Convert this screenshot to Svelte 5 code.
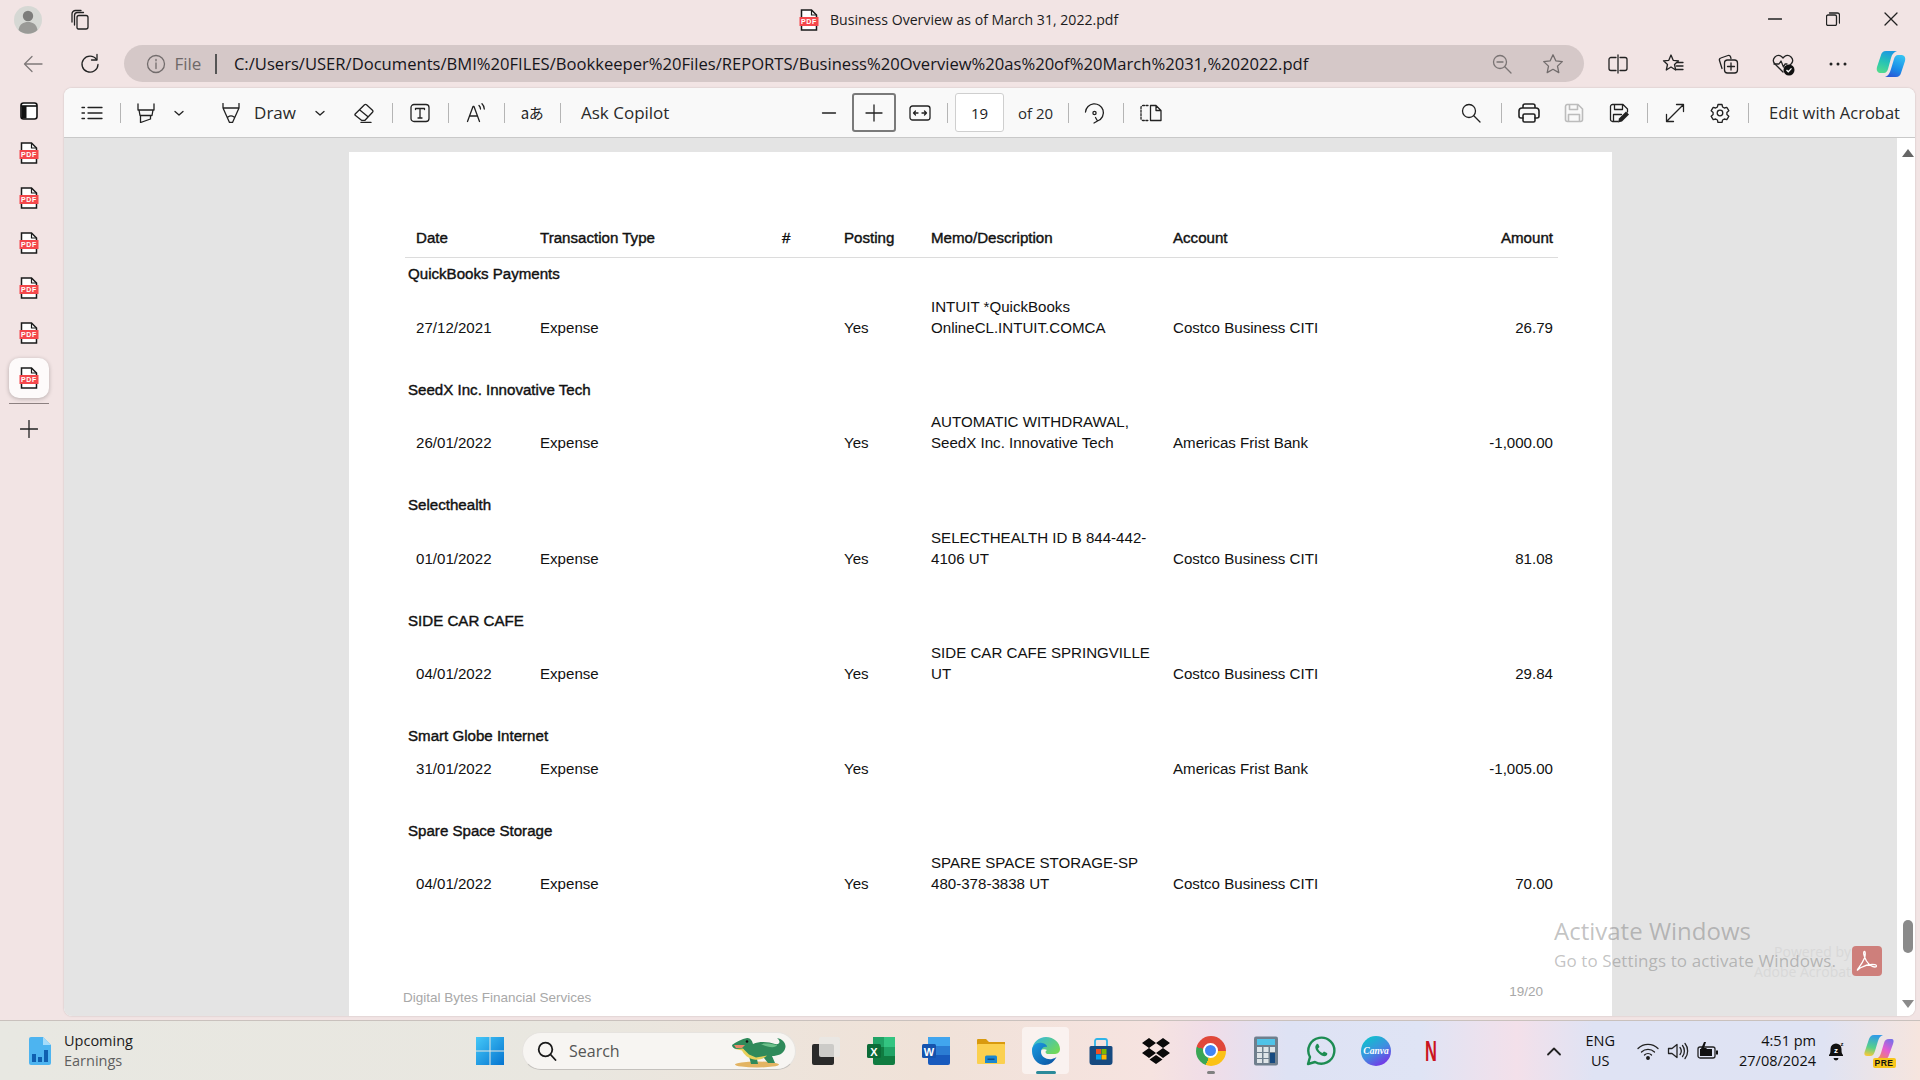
<script>
  // Ledger rows shown on the PDF page
  const groups = [
    { name: 'QuickBooks Payments', date: '27/12/2021', memo: ['INTUIT *QuickBooks', 'OnlineCL.INTUIT.COMCA'], account: 'Costco Business CITI', amount: '26.79' },
    { name: 'SeedX Inc. Innovative Tech', date: '26/01/2022', memo: ['AUTOMATIC WITHDRAWAL,', 'SeedX Inc. Innovative Tech'], account: 'Americas Frist Bank', amount: '-1,000.00' },
    { name: 'Selecthealth', date: '01/01/2022', memo: ['SELECTHEALTH ID B 844-442-', '4106 UT'], account: 'Costco Business CITI', amount: '81.08' },
    { name: 'SIDE CAR CAFE', date: '04/01/2022', memo: ['SIDE CAR CAFE SPRINGVILLE', 'UT'], account: 'Costco Business CITI', amount: '29.84' },
    { name: 'Smart Globe Internet', date: '31/01/2022', memo: [], account: 'Americas Frist Bank', amount: '-1,005.00' },
    { name: 'Spare Space Storage', date: '04/01/2022', memo: ['SPARE SPACE STORAGE-SP', '480-378-3838 UT'], account: 'Costco Business CITI', amount: '70.00' }
  ];

  const url = 'C:/Users/USER/Documents/BMI%20FILES/Bookkeeper%20Files/REPORTS/Business%20Overview%20as%20of%20March%2031,%202022.pdf';
  const sideTabs = [false, false, false, false, false, true];
</script>

{#snippet pdfIcon()}
  <svg class="pdf" viewBox="0 0 20 22" width="20" height="22">
    <path d="M2.500 1h10l5 5v15h-15z" fill="#fff" stroke="#1a1a1a" stroke-width="1.500" />
    <path d="M12.500 1v5h5" fill="none" stroke="#1a1a1a" stroke-width="1.200" />
    <rect x="0.500" y="8" width="19" height="9" fill="#f4474b" />
    <text x="10" y="15.200" text-anchor="middle" class="pdf-label">PDF</text>
  </svg>
{/snippet}

{#snippet chevron()}
  <svg class="ic" viewBox="0 0 12 12" width="12" height="12"><path d="M2 4.500 6 8l4-3.500" /></svg>
{/snippet}

<div class="screen">
  <header class="titlebar">
    <div class="title-left">
      <svg viewBox="0 0 28 28" width="28" height="28">
        <circle cx="14" cy="14" r="14" fill="#d6d8d4" />
        <circle cx="14" cy="10" r="5.200" fill="#7d7d7b" />
        <path d="M4.500 24c1-6 5-8 9.500-8s8.500 2 9.500 8a14 14 0 0 1-19 0z" fill="#9a9a97" />
      </svg>
      <svg class="ic tabs-icon" viewBox="0 0 22 22" width="22" height="22">
        <path d="M9 20h8a2 2 0 0 0 2-2V8.500a2 2 0 0 0-2-2H10a2 2 0 0 0-2 2V19z" />
        <path d="M5.500 16V6.500a3 3 0 0 1 3-3h6" />
        <path d="M3 13V5a3.500 3.500 0 0 1 3.500-3.500H12" />
      </svg>
    </div>
    <div class="title-center">
      {@render pdfIcon()}
      <span>Business Overview as of March 31, 2022.pdf</span>
    </div>
    <div class="window-controls">
      <svg class="ic" viewBox="0 0 14 14" width="14" height="14"><path d="M0.500 7h13" /></svg>
      <svg class="ic" viewBox="0 0 14 14" width="14" height="14"><rect x="0.500" y="3" width="10" height="10.500" rx="1.500" /><path d="M3.500 1h8a2 2 0 0 1 2 2v8" /></svg>
      <svg class="ic" viewBox="0 0 14 14" width="14" height="14"><path d="M1 1l12 12M13 1 1 13" /></svg>
    </div>
  </header>

  <nav class="addressrow">
    <button class="nav-btn back" aria-label="Back">
      <svg class="ic" viewBox="0 0 22 22" width="22" height="22"><path d="M20 11H2.500M10 3.500 2.500 11l7.500 7.500" /></svg>
    </button>
    <button class="nav-btn refresh" aria-label="Refresh">
      <svg class="ic" viewBox="0 0 22 22" width="22" height="22"><path d="M17.500 6.500A8 8 0 1 0 19 11.500" /><path d="M18 1.500v5.500h-5.500" /></svg>
    </button>
    <div class="addressbar">
      <svg class="ic info" viewBox="0 0 20 20" width="20" height="20"><circle cx="10" cy="10" r="8.500" /><path d="M10 9v5.500M10 5.500v1.300" /></svg>
      <span class="file">File</span>
      <span class="bar"></span>
      <span class="url">{url}</span>
      <svg class="ic addr-zoom" viewBox="0 0 20 20" width="20" height="20"><circle cx="8" cy="8" r="6.500" /><path d="M12.800 12.800 19 19M5 8h6" /></svg>
      <svg class="ic addr-star" viewBox="0 0 22 22" width="22" height="22"><path d="m11 1.800 2.800 6 6.500.8-4.800 4.500 1.300 6.500-5.800-3.300-5.800 3.300 1.300-6.500L1.700 8.600l6.500-.8z" /></svg>
    </div>
    <div class="browser-tools">
      <svg class="ic" viewBox="0 0 20 20" width="20" height="20"><path d="M10 1v18M8 3.500H3a2 2 0 0 0-2 2v9a2 2 0 0 0 2 2h5M12 3.500h5a2 2 0 0 1 2 2v9a2 2 0 0 1-2 2h-5" /></svg>
      <svg class="ic" viewBox="0 0 22 22" width="22" height="22"><path d="m9 2 2.200 5.300 5.300.5-4 3.700 1.200 5.500L9 14l-4.700 3 1.200-5.500-4-3.700 5.300-.5zM15 9.500h6M14.500 13h6.500M13.500 16.500H21" /></svg>
      <svg class="ic" viewBox="0 0 22 22" width="22" height="22"><path d="M5 15.500 2.500 7.500a2 2 0 0 1 1.300-2.500L11 2.500a2 2 0 0 1 2.500 1.300l.5 1.700" /><rect x="7.500" y="7" width="13" height="13" rx="3" /><path d="M14 10v7M10.500 13.500h7" /></svg>
      <svg viewBox="0 0 24 24" width="24" height="24">
        <path class="stroke-only" d="M12 20 3.500 11.500a5 5 0 0 1 7-7L12 6l1.500-1.500a5 5 0 0 1 7 7L19 13" />
        <path class="stroke-only" d="M3 12h5l2-3 2.500 6 1.500-3h2" />
        <circle cx="18" cy="18" r="5.500" fill="#111" />
        <path d="m15.500 18 1.800 1.800 3.200-3.400" fill="none" stroke="#fff" stroke-width="1.300" />
      </svg>
      <svg viewBox="0 0 18 4" width="18" height="4"><circle cx="2" cy="2" r="1.500" fill="#222" /><circle cx="9" cy="2" r="1.500" fill="#222" /><circle cx="16" cy="2" r="1.500" fill="#222" /></svg>
      <svg class="copilot" viewBox="0 0 32 28" width="32" height="28">
        <defs>
          <linearGradient id="cpA" x1="0.500" y1="0" x2="0.200" y2="1"><stop offset="0" stop-color="#1c9ae0" /><stop offset="0.500" stop-color="#27c4b4" /><stop offset="1" stop-color="#55dc8c" /></linearGradient>
          <linearGradient id="cpB" x1="0.700" y1="0" x2="0.300" y2="1"><stop offset="0" stop-color="#35c1f1" /><stop offset="0.600" stop-color="#1b8ce8" /><stop offset="1" stop-color="#2b58d6" /></linearGradient>
        </defs>
        <path d="M11 1C8 1 6.500 3 6 5L2 17c-1 4 1 6 4 6h3c2 0 3.500-2 4-4l3-11c1-4 3-6 6-7z" fill="url(#cpA)" />
        <path d="M21 27c3 0 4.500-2 5-4l4-12c1-4-1-6-4-6h-3c-2 0-3.500 2-4 4l-3 10c-1 4-3 7-6 8z" fill="url(#cpB)" />
      </svg>
    </div>
  </nav>

  <div class="workspace">
    <aside class="sidebar">
      <svg class="panel-icon" viewBox="0 0 18 18" width="18" height="18">
        <rect x="1" y="1" width="16" height="16" rx="2.500" fill="#fff" stroke="#111" stroke-width="1.600" />
        <path d="M1 4h16" stroke="#111" stroke-width="1.600" />
        <rect x="1.500" y="4" width="5" height="12.500" fill="#111" />
      </svg>
      {#each sideTabs as active}
        <div class="side-tab" class:active>
          {@render pdfIcon()}
        </div>
      {/each}
      <div class="side-line"></div>
      <svg class="ic side-plus" viewBox="0 0 18 18" width="18" height="18"><path d="M9 0.500v17M0.500 9h17" /></svg>
    </aside>

    <main class="panel">
      <div class="toolbar">
        <button class="tb" aria-label="Contents">
          <svg class="ic" viewBox="0 0 22 16" width="22" height="16"><path d="M7 2.500h14M7 8h14M7 13.500h14M1 2.500h2.500M1 8h2.500M1 13.500h2.500" /></svg>
        </button>
        <span class="sep"></span>
        <button class="tb high" aria-label="Highlight">
          <svg class="ic" viewBox="0 0 20 20" width="20" height="20"><path d="M2 1v6h16V1M3 7l1 5.500h12l1-5.500M4.500 12.500V19.500l10-3.500v-3.500" /></svg>
        </button>
        <button class="tb-chev high-chev" aria-label="Highlight options">{@render chevron()}</button>
        <button class="tb pen" aria-label="Draw pen">
          <svg class="ic" viewBox="0 0 20 20" width="20" height="20"><path d="M2 .5v4.500l6.500 14.500h3L18 5V.5M2 5h16M7 14c2-1.500 4-1.500 6 0" /></svg>
        </button>
        <span class="tb-text draw">Draw</span>
        <button class="tb-chev draw-chev" aria-label="Draw options">{@render chevron()}</button>
        <button class="tb eraser" aria-label="Erase">
          <svg class="ic" viewBox="0 0 20 20" width="20" height="20"><path d="M1.200 11 10.500 1.800a1.500 1.500 0 0 1 2 0l6 5.500a1.500 1.500 0 0 1 0 2l-7.500 8H7.500l-6.300-5a1 1 0 0 1 0-1.300zM5.500 6.800l8.500 7M7 19.500h10" /></svg>
        </button>
        <span class="sep"></span>
        <button class="tb" aria-label="Add text">
          <svg class="ic" viewBox="0 0 20 20" width="20" height="20"><rect x="1" y="1.500" width="18" height="17" rx="3" /><path d="M5.500 6.500v-1h9v1M10 5.500v9.500M8 15h4" /></svg>
        </button>
        <span class="sep"></span>
        <button class="tb" aria-label="Read aloud">
          <svg class="ic" viewBox="0 0 20 20" width="20" height="20"><path d="M1.500 18.500 7 3.500h1l5.500 15M4 13h7M13 2.500c1 1 1.500 2.300 1.500 3.500M16 .8c1.500 1.500 2.300 3.300 2.300 5.200" /></svg>
        </button>
        <span class="sep"></span>
        <button class="tb translate">aあ</button>
        <span class="sep"></span>
        <span class="tb-text ask">Ask Copilot</span>

        <button class="tb zoom-out" aria-label="Zoom out">
          <svg class="ic" viewBox="0 0 16 16" width="16" height="16"><path d="M1.500 8h13" /></svg>
        </button>
        <button class="zoom-in" aria-label="Zoom in">
          <svg class="ic" viewBox="0 0 18 18" width="18" height="18"><path d="M9 1v16M1 9h16" /></svg>
        </button>
        <button class="tb fit" aria-label="Fit to width">
          <svg class="ic" viewBox="0 0 22 18" width="22" height="18"><rect x="1" y="2" width="20" height="14" rx="2.500" /><path d="M4.500 9h4.500M13 9h4.500M6.500 7 4.500 9l2 2M15.500 7l2 2-2 2" /></svg>
        </button>
        <span class="sep"></span>
        <div class="page-box">19</div>
        <span class="tb-text of">of 20</span>
        <span class="sep sep-of"></span>
        <button class="tb" aria-label="Rotate">
          <svg class="ic" viewBox="0 0 22 22" width="22" height="22"><path d="M1.500 10A9 9 0 0 1 19 8c1.500 4.500-1 9.500-5.500 11M10 21l3.500-2-2-3.500" /><circle cx="10.500" cy="11" r="1.600" /></svg>
        </button>
        <span class="sep"></span>
        <button class="tb" aria-label="Page view">
          <svg class="ic" viewBox="0 0 22 20" width="22" height="20"><path d="M8 2.500H3a2 2 0 0 0-2 2v11a2 2 0 0 0 2 2h5" stroke-dasharray="2 1.500" /><path d="M10.500 2.500h5.500l5 5v10H10.500zM16 2.500v5h5" /></svg>
        </button>

        <div class="tb-right">
          <button class="tb find" aria-label="Find">
            <svg class="ic" viewBox="0 0 20 20" width="20" height="20"><circle cx="8" cy="8" r="6.500" /><path d="M12.800 12.800 19 19" /></svg>
          </button>
          <span class="sep"></span>
          <button class="tb" aria-label="Print">
            <svg class="ic thick" viewBox="0 0 22 20" width="22" height="20"><path d="M5 5V3a2 2 0 0 1 2-2h8a2 2 0 0 1 2 2v2M5 15H3a2 2 0 0 1-2-2V8a3 3 0 0 1 3-3h14a3 3 0 0 1 3 3v5a2 2 0 0 1-2 2h-2" /><rect x="5" y="11" width="12" height="8" rx="1.500" /></svg>
          </button>
          <button class="tb save-off" aria-label="Save">
            <svg class="ic thick" viewBox="0 0 20 20" width="20" height="20"><path d="M3 1.500h11l4.500 4.500v10.500a2 2 0 0 1-2 2h-13a2 2 0 0 1-2-2v-13a2 2 0 0 1 1.500-2zM5.500 1.500v5h8v-5M4.500 18.500v-7h11v7" /></svg>
          </button>
          <button class="tb" aria-label="Save as">
            <svg viewBox="0 0 20 20" width="20" height="20"><path class="stroke-only" d="M9 18.500H3.500a2 2 0 0 1-2-2v-13a2 2 0 0 1 2-2H14l4.500 4.500v3M5.500 1.500v5h8v-5M4.500 18.500v-7h8" /><path d="m9 19.500 1-4 7-7 3 3-7 7z" fill="#222" /></svg>
          </button>
          <span class="sep"></span>
          <button class="tb" aria-label="Full screen">
            <svg class="ic" viewBox="0 0 20 20" width="20" height="20"><path d="M1.500 18.500l17-17M11.500 1.500h7v7M1.500 11.500v7h7" /></svg>
          </button>
          <button class="tb" aria-label="Settings">
            <svg class="ic" viewBox="0 0 20 20" width="20" height="20"><path d="m8 1.500h4l.6 2.500 1.700 1 2.500-.7 2 3.400-1.900 1.800v2l1.900 1.800-2 3.400-2.500-.7-1.700 1-.6 2.500H8l-.6-2.500-1.700-1-2.500.7-2-3.400 1.900-1.800v-2L1.200 7.700l2-3.400 2.500.7 1.700-1z" /><circle cx="10" cy="10" r="2.800" /></svg>
          </button>
          <span class="sep"></span>
          <span class="tb-text edit">Edit with Acrobat</span>
        </div>
      </div>

      <div class="viewer">
        <div class="page-area">
          <section class="page">
            <div class="ledger-head">
              <span>Date</span>
              <span>Transaction Type</span>
              <span>#</span>
              <span>Posting</span>
              <span>Memo/Description</span>
              <span>Account</span>
              <span class="amount">Amount</span>
            </div>
            {#each groups as g}
              <div class="group">
                <div class="group-name">{g.name}</div>
                <div class="ledger-row">
                  <span>{g.date}</span>
                  <span>Expense</span>
                  <span></span>
                  <span>Yes</span>
                  <span>
                    {#each g.memo as line}
                      <span class="memo-line">{line}</span>
                    {/each}
                  </span>
                  <span>{g.account}</span>
                  <span class="amount">{g.amount}</span>
                </div>
              </div>
            {/each}
            <div class="page-foot">
              <span class="foot-left">Digital Bytes Financial Services</span>
              <span>19/20</span>
            </div>
          </section>
        </div>
        <div class="scrollbar">
          <span class="arrow-up"></span>
          <span class="thumb"></span>
          <span class="arrow-down"></span>
        </div>

        <div class="powered"><span>Powered by</span><span>Adobe Acrobat</span></div>
        <div class="acrobat-badge">
          <svg class="ic" viewBox="0 0 24 24" width="24" height="24"><path d="M2.500 20.500c2-3 5-6.500 7-11.500 1-3 1-6.500 0-6.500-1.500 0-1 4.500 2 9.500 3 4.500 6 6 8.500 6 2 0 2-2 0-2.300-4-.6-10 .6-14.500 3-2 1.500-3.500 3-3 2.300z" /></svg>
        </div>
      </div>
    </main>
  </div>

  <footer class="taskbar">
    <div class="widget">
      <svg viewBox="0 0 22 28" width="22" height="28">
        <path d="M2 0h12l8 8v18a2 2 0 0 1-2 2H2a2 2 0 0 1-2-2V2a2 2 0 0 1 2-2z" fill="#4db4f0" />
        <path d="M14 0l8 8h-8z" fill="#a5dcfa" />
        <rect x="3" y="17" width="4" height="8" fill="#0f5fb0" /><rect x="9" y="20" width="4" height="5" fill="#0f5fb0" /><rect x="15" y="13" width="4" height="12" fill="#0f5fb0" />
      </svg>
      <div class="widget-text"><span>Upcoming</span><span class="muted">Earnings</span></div>
    </div>

    <div class="task-center">
      <div class="task-icon">
        <svg viewBox="0 0 30 30" width="30" height="30">
          <defs><linearGradient id="winG" x1="0" y1="0" x2="1" y2="1"><stop offset="0" stop-color="#45c8f8" /><stop offset="1" stop-color="#0574d0" /></linearGradient></defs>
          <path d="M1 1h13.500v13.500H1zM15.500 1H29v13.500H15.500zM1 15.500h13.500V29H1zM15.500 15.500H29V29H15.500z" fill="url(#winG)" />
        </svg>
      </div>
      <div class="search">
        <svg class="ic search-glass" viewBox="0 0 20 20" width="20" height="20"><circle cx="8.500" cy="8.500" r="6.800" /><path d="M13.500 13.500 18.500 19" /></svg>
        <span>Search</span>
        <svg class="dragon" viewBox="0 0 56 32" width="56" height="32">
          <ellipse cx="26" cy="28.500" rx="22" ry="3" fill="#e3b463" />
          <path d="M1 9c4-3 10-6 15-7 3-.5 5 2 6 6 7-3 16-2 22 0 5 1 6-3 2-6 6 1 10 6 8 11-2 5-7 7-13 7l3 7h-7l-4-5-7 1 1 5h-7l-2-8c-3-1-5-4-6-7l-6 0c-3 0-5-2-5-4z" fill="#2f8a5a" />
          <path d="M30 8c6-1 11 0 16 1-1 3-8 3-16-1z" fill="#6cc08a" />
          <path d="M4 13l8-.5 6 6 7 3 6-1 5-1c-3 3-8 5-13 4-6-1-10-5-12-9z" fill="#e8d05a" />
          <path d="M3 9h11l-3 3H5z" fill="#e98a6a" />
          <circle cx="16" cy="5.500" r="1.300" fill="#111" />
        </svg>
      </div>

      <div class="task-icon">
        <svg viewBox="0 0 30 30" width="30" height="30">
          <rect x="1" y="8" width="22" height="21" rx="2" fill="#2a2a2a" />
          <rect x="8" y="1" width="21" height="20" rx="2" fill="#e9e7e4" opacity="0.850" />
        </svg>
      </div>
      <div class="task-icon">
        <svg viewBox="0 0 30 30" width="30" height="30">
          <rect x="7" y="1" width="22" height="28" rx="2" fill="#107c41" />
          <rect x="18" y="1" width="11" height="10" fill="#33c481" /><rect x="7" y="1" width="11" height="10" fill="#21a366" /><rect x="18" y="11" width="11" height="9" fill="#21a366" />
          <rect x="1" y="8" width="14" height="14" rx="1.500" fill="#0c6b37" />
          <text x="8" y="19.500" text-anchor="middle" class="app-letter">X</text>
        </svg>
      </div>
      <div class="task-icon">
        <svg viewBox="0 0 30 30" width="30" height="30">
          <rect x="7" y="1" width="22" height="28" rx="2" fill="#185abd" />
          <rect x="7" y="1" width="22" height="9" fill="#41a5ee" /><rect x="7" y="10" width="22" height="9" fill="#2b7cd3" />
          <rect x="1" y="8" width="14" height="14" rx="1.500" fill="#1553ad" />
          <text x="8" y="19.500" text-anchor="middle" class="app-letter">W</text>
        </svg>
      </div>
      <div class="task-icon">
        <svg viewBox="0 0 30 30" width="30" height="30">
          <path d="M1 4a1 1 0 0 1 1-1h8l3 3h16v4H1z" fill="#d99a0e" />
          <rect x="1" y="8" width="28" height="20" rx="1" fill="#fbd04f" />
          <path d="M9 27v-6a1.500 1.500 0 0 1 1.500-1.500h9A1.500 1.500 0 0 1 21 21v6z" fill="#1b87d0" /><rect x="11.500" y="22.500" width="7" height="1.500" fill="#0c4f8a" />
        </svg>
      </div>
      <div class="task-icon edge">
        <svg viewBox="0 0 30 30" width="30" height="30">
          <defs>
            <linearGradient id="edgeA" x1="0" y1="0" x2="1" y2="0.700"><stop offset="0" stop-color="#2fb4ea" /><stop offset="1" stop-color="#72d85a" /></linearGradient>
            <linearGradient id="edgeB" x1="0" y1="0" x2="1" y2="1"><stop offset="0" stop-color="#1b9de2" /><stop offset="1" stop-color="#0b4f9e" /></linearGradient>
          </defs>
          <path d="M1 14C2 6 8 1 15 1c8 0 14 6 14 12 0 4-3 5-6 5h-7c-2-1-2-3 0-4-3-2-8 0-9 2z" fill="url(#edgeA)" />
          <path d="M1 15C1 9 6 6 11 7c3 .5 5 2 5 4-3-1-6 1-6 5 0 5 6 8 11 7 2-.5 3-1 4.500-2-2.500 5-7 8-11.500 8C7 29 1 23 1 15z" fill="url(#edgeB)" />
        </svg>
        <span class="run-mark teal"></span>
      </div>
      <div class="task-icon">
        <svg viewBox="0 0 30 30" width="30" height="30">
          <path d="M5 10h20a1.500 1.500 0 0 1 1.500 1.500V26a3 3 0 0 1-3 3h-17a3 3 0 0 1-3-3V11.500A1.500 1.500 0 0 1 5 10z" fill="#164a80" />
          <path d="M9 10V5a2 2 0 0 1 2-2h8a2 2 0 0 1 2 2v5" fill="none" stroke="#2fb4e8" stroke-width="1.800" />
          <rect x="10" y="13" width="5" height="5" fill="#f25022" /><rect x="15.500" y="13" width="5" height="5" fill="#7fba00" /><rect x="10" y="18.500" width="5" height="5" fill="#00a4ef" /><rect x="15.500" y="18.500" width="5" height="5" fill="#ffb900" />
        </svg>
      </div>
      <div class="task-icon">
        <svg viewBox="0 0 30 30" width="30" height="30" fill="#0a0a0a">
          <path d="M8 2 15 7 8 12 1 7zM22 2l7 5-7 5-7-5zM8 12l7 5-7 5-7-5zM22 12l7 5-7 5-7-5zM15 19l6.500 4.500L15 28l-6.500-4.500z" />
        </svg>
      </div>
      <div class="task-icon">
        <div class="chrome"><span></span></div>
        <span class="run-mark grey"></span>
      </div>
      <div class="task-icon">
        <svg viewBox="0 0 30 30" width="30" height="30">
          <rect x="3" y="0.500" width="24" height="29" rx="2" fill="#6f7f8d" />
          <rect x="6" y="3" width="18" height="6" fill="#4fc3e8" />
          <path d="M6 11h5v5H6zM12.500 11h5v5h-5zM6 17h5v5H6zM12.500 17h5v5h-5zM6 23h5v4H6zM12.500 23h5v4h-5zM19 11h5v5h-5z" fill="#dfe5e8" />
          <rect x="19" y="17" width="5" height="10" fill="#164a80" />
        </svg>
      </div>
      <div class="task-icon">
        <svg viewBox="0 0 30 30" width="30" height="30">
          <path d="M2 28l2-7A13 13 0 1 1 9 26z" fill="none" stroke="#1c8c52" stroke-width="2.400" stroke-linejoin="round" />
          <path d="M10.500 8.500c-2 1.500-1.500 5 2 8.500s6.500 4 8 2.500c1-1 1-2 .5-2.500l-3-1.500-1.500 1.500c-2-.5-4-2.500-4.500-4.500l1.500-1.500-1-2.500c-.5-1-1.500-1-2-.5z" fill="#1c8c52" />
        </svg>
      </div>
      <div class="task-icon">
        <svg viewBox="0 0 30 30" width="30" height="30">
          <defs><linearGradient id="canvaG" x1="0.200" y1="0" x2="0.800" y2="1"><stop offset="0" stop-color="#0cc4cc" /><stop offset="0.500" stop-color="#3f8fe0" /><stop offset="1" stop-color="#7d2ae8" /></linearGradient></defs>
          <circle cx="15" cy="15" r="15" fill="url(#canvaG)" />
          <text x="15" y="18" text-anchor="middle" class="canva">Canva</text>
        </svg>
      </div>
      <div class="task-icon">
        <span class="netflix">N</span>
      </div>
    </div>

    <div class="tray">
      <svg class="ic tray-chev" viewBox="0 0 16 10" width="16" height="10"><path d="M2 8.500 8 2.500l6 6" /></svg>
      <div class="lang"><span>ENG</span><span>US</span></div>
      <svg class="ic tray-wifi" viewBox="0 0 22 18" width="22" height="18"><path d="M1 6.500a14 14 0 0 1 20 0M4.500 10a9.500 9.500 0 0 1 13 0M7.500 13a5 5 0 0 1 7 0" /><circle cx="11" cy="16" r="1.300" fill="#111" /></svg>
      <svg class="ic" viewBox="0 0 22 18" width="22" height="18"><path d="M1.500 6.500h3.500L10 2.500v13L5 11.500H1.500zM13 5.500c1.500 2 1.500 5 0 7M15.500 3.500c2.500 3 2.500 8 0 11M18 1.500c3.500 4 3.500 11 0 15" /></svg>
      <svg viewBox="0 0 22 18" width="22" height="18"><rect class="stroke-only" x="1" y="5" width="17" height="11" rx="2" /><rect x="3" y="7" width="12" height="7" fill="#111" /><rect x="19" y="8.500" width="2" height="4" fill="#111" /><path d="M7 0 3.500 8h3L5 12l5-6H7l2-6z" fill="#111" /></svg>
      <div class="clock"><span>4:51 pm</span><span>27/08/2024</span></div>
      <div class="bell">
        <svg viewBox="0 0 18 20" width="18" height="20"><path d="M2 14c1.500-1.500 1.500-3 1.500-6a5.500 5.500 0 0 1 11 0c0 3 0 4.500 1.500 6v1H2z" fill="#111" /><path d="M6.500 17h5a2.500 2.500 0 0 1-5 0z" fill="#111" /><text x="9" y="12" text-anchor="middle" class="bell-z">z</text><text x="15" y="5" text-anchor="middle" class="bell-zz">z</text></svg>
      </div>
      <div class="copilot-pre">
        <svg viewBox="0 0 30 26" width="30" height="26">
          <defs>
            <linearGradient id="preA" x1="0.500" y1="0" x2="0.300" y2="1"><stop offset="0" stop-color="#2f9be8" /><stop offset="0.600" stop-color="#58d08a" /><stop offset="1" stop-color="#f5c93a" /></linearGradient>
            <linearGradient id="preB" x1="0.800" y1="0" x2="0.200" y2="1"><stop offset="0" stop-color="#7a6fe8" /><stop offset="0.500" stop-color="#e45bd0" /><stop offset="1" stop-color="#f08a5a" /></linearGradient>
          </defs>
          <path d="M10 1C7 1 6 3 5 5L1 17c-1 2-1 5 2 5h3c3 0 4-2 5-5l3-10c1-3 2-5 5-6z" fill="url(#preA)" />
          <path d="M20 25c3 0 4-1 5-4l4-11c1-3 1-5-2-5h-2c-3 0-4 1-5 4l-3 10c-1 3-2 5-5 6z" fill="url(#preB)" />
        </svg>
        <span class="pre-tag">PRE</span>
      </div>
    </div>
  </footer>

  <div class="activate">
    <div class="activate-title">Activate Windows</div>
    <div class="activate-sub">Go to Settings to activate Windows.</div>
  </div>
</div>

<style>
  :global(body) {
    margin: 0;
    background: #f2e4e4;
  }

  button {
    border: none;
    background: none;
    padding: 0;
    color: inherit;
  }

  .screen {
    position: relative;
    width: 1920px;
    height: 1080px;
    overflow: hidden;
    display: flex;
    flex-direction: column;
    background: #f2e4e4;
    color: #1c1c1c;
    font-family: "Open Sans", "Noto Sans", sans-serif;
  }

  .ic, .stroke-only {
    fill: none;
    stroke: #222;
    stroke-width: 1.300;
    stroke-linecap: round;
    stroke-linejoin: round;
  }

  .ic.thick { stroke-width: 1.600; }

  .pdf-label {
    font: 700 7px "Liberation Sans", sans-serif;
    letter-spacing: 0.600px;
    fill: #fff;
  }

  /* Title row */
  .titlebar {
    height: 42px;
    display: flex;
    align-items: center;
    position: relative;
    flex: none;
  }

  .title-left {
    display: flex;
    align-items: center;
    gap: 27px;
    padding-left: 14px;
    margin-top: -2px;
  }

  .title-center {
    position: absolute;
    left: 799px;
    top: 9px;
    display: flex;
    align-items: center;
    gap: 11px;
    font-size: 14.100px;
    line-height: 22px;
  }

  .window-controls {
    margin-left: auto;
    display: flex;
    gap: 44px;
    padding-right: 22px;
    margin-top: -4px;
  }

  /* Address row */
  .addressrow {
    height: 37px;
    display: flex;
    align-items: center;
    flex: none;
    margin-top: 3px;
  }

  .nav-btn {
    width: 55px;
    display: flex;
    justify-content: center;
  }

  .nav-btn.back {
    width: 56px;
    margin-left: 6px;
    opacity: 0.55;
  }

  .nav-btn.refresh { margin-left: 2px; }

  .addressbar {
    width: 1460px;
    height: 37px;
    border-radius: 19px;
    background: #d5c8c8;
    display: flex;
    align-items: center;
    flex: none;
    margin-left: 7px;
    position: relative;
    font-size: 17px;
  }

  .info {
    margin-left: 22px;
    opacity: 0.55;
  }

  .file {
    margin-left: 9px;
    color: #6f6868;
  }

  .bar {
    width: 1.500px;
    height: 20px;
    background: #555;
    margin-left: 14px;
  }

  .url {
    margin-left: 17px;
    white-space: nowrap;
    color: #15151a;
    font-size: 16.600px;
  }

  .addr-zoom {
    position: absolute;
    left: 1368px;
    opacity: 0.5;
  }

  .addr-star {
    position: absolute;
    left: 1418px;
    opacity: 0.55;
  }

  .browser-tools {
    display: grid;
    grid-template-columns: repeat(6, 55px);
    justify-items: center;
    align-items: center;
    margin-left: 6.500px;
  }

  .copilot { margin-left: -4px; }

  /* Sidebar + panel */
  .workspace {
    flex: 1;
    display: flex;
    min-height: 0;
    margin-top: 6px;
    margin-bottom: 4px;
  }

  .sidebar {
    width: 64px;
    flex: none;
    display: flex;
    flex-direction: column;
    align-items: center;
    box-sizing: border-box;
    padding-right: 6px;
  }

  .panel-icon {
    margin-top: 14px;
    margin-bottom: 13px;
  }

  .side-tab {
    width: 40px;
    height: 40px;
    margin-bottom: 5px;
    display: flex;
    align-items: center;
    justify-content: center;
    border-radius: 10px;
  }

  .side-tab.active {
    background: #fdfafa;
    box-shadow: 0 1px 4px rgba(0, 0, 0, 0.25);
  }

  .side-line {
    width: 40px;
    height: 1px;
    background: #8c8080;
  }

  .side-plus { margin-top: 16px; }

  .panel {
    flex: 1;
    margin-right: 5px;
    min-width: 0;
    display: flex;
    flex-direction: column;
    border-radius: 8px;
    overflow: hidden;
    background: #fff;
    box-shadow: 0 0 2px rgba(0, 0, 0, 0.2);
  }

  /* Toolbar */
  .toolbar {
    height: 50px;
    box-sizing: border-box;
    flex: none;
    display: flex;
    align-items: center;
    background: #f9f9f9;
    border-bottom: 1px solid #c9c9c9;
    padding-left: 10px;
    padding-right: 15px;
  }

  .tb {
    width: 36px;
    height: 36px;
    display: flex;
    align-items: center;
    justify-content: center;
    flex: none;
  }

  .tb-chev {
    width: 32px;
    display: flex;
    justify-content: center;
    flex: none;
  }

  .sep {
    width: 1px;
    height: 20px;
    background: #b5b5b5;
    margin: 0 9.500px;
    flex: none;
  }

  .tb-text {
    font-size: 17px;
    white-space: nowrap;
    color: #2a2a2a;
  }

  .translate {
    font: 15px "Noto Sans CJK JP", "Noto Sans", sans-serif;
    letter-spacing: -0.500px;
    color: #222;
  }

  .high { margin-left: -2px; }
  .high-chev { margin-left: -1px; }
  .pen { margin-left: 18px; }
  .draw { margin-left: 2px; width: 48px; text-align: center; }
  .draw-chev { margin-left: 5px; }
  .eraser { margin-left: 10px; }
  .ask { margin-left: 11px; width: 88px; }

  .zoom-out { margin-left: 142px; }

  .zoom-in {
    width: 44px;
    height: 39px;
    margin-left: 5px;
    border: 2px solid #7a7a7a;
    border-radius: 3px;
    box-sizing: border-box;
    display: flex;
    align-items: center;
    justify-content: center;
    flex: none;
  }

  .fit { margin-left: 6px; }
  .fit + .sep { margin: 0 7px 0 9px; }

  .page-box {
    width: 49px;
    height: 39px;
    box-sizing: border-box;
    border: 1px solid #cfcfcf;
    border-radius: 3px;
    background: #fff;
    display: flex;
    align-items: center;
    justify-content: center;
    font-size: 15px;
    flex: none;
  }

  .of {
    font-size: 15px;
    margin-left: 14px;
    width: 34px;
  }

  .sep-of { margin-left: 16px; margin-right: 8px; }

  .tb-right {
    margin-left: auto;
    display: flex;
    align-items: center;
  }

  .tb-right .tb + .tb { margin-left: 9px; }
  .tb-right .find { margin-right: 2px; }
  .save-off { opacity: 0.28; }
  .edit { margin-left: 11px; font-size: 16.500px; }

  /* Viewer */
  .viewer {
    flex: 1;
    min-height: 0;
    display: flex;
    position: relative;
  }

  .page-area {
    flex: 1;
    min-width: 0;
    background: #e4e4e4;
    display: flex;
    justify-content: center;
    overflow: hidden;
    padding-top: 14px;
  }

  .page {
    width: 1263px;
    flex: none;
    box-sizing: border-box;
    background: #fff;
    padding: 75px 54px 0 56px;
    font: 15.100px/21px "Liberation Sans", Arial, sans-serif;
    color: #111;
    height: 900px;
  }

  .ledger-head,
  .ledger-row {
    display: grid;
    grid-template-columns: 124px 242px 62px 87px 242px 200px 1fr;
    padding: 0 5px 0 11px;
    align-items: end;
  }

  /* the PDF renders its headings with a thickened regular face */
  .ledger-head,
  .group-name {
    -webkit-text-stroke: 0.400px #111;
  }

  .ledger-head {
    padding-bottom: 9px;
    border-bottom: 1px solid #dcdcdc;
  }

  .amount { text-align: right; }

  .group {
    padding-top: 5px;
    padding-bottom: 36px;
  }

  .group-name {
    padding-left: 3px;
    margin-bottom: 11.500px;
  }

  .memo-line {
    display: block;
    white-space: nowrap;
  }

  .page-foot {
    display: flex;
    justify-content: space-between;
    align-items: flex-start;
    margin: 50.500px 15px 0 -2px;
    font-size: 13.500px;
    color: #a8a8a8;
  }

  .foot-left { margin-top: 6px; }

  .scrollbar {
    width: 18px;
    flex: none;
    background: #fff;
    display: flex;
    flex-direction: column;
    align-items: center;
    padding: 11px 0 8px 3px;
    box-sizing: border-box;
  }

  .arrow-up {
    width: 0;
    height: 0;
    border: 6px solid transparent;
    border-top: none;
    border-bottom: 8px solid #666;
  }

  .arrow-down {
    width: 0;
    height: 0;
    border: 6px solid transparent;
    border-bottom: none;
    border-top: 8px solid #8a8a8a;
  }

  .thumb {
    width: 10px;
    height: 33px;
    border-radius: 5px;
    background: #8a8a8a;
    margin-top: auto;
    margin-bottom: 47px;
  }

  .powered {
    position: absolute;
    right: 64px;
    top: 804px;
    display: flex;
    flex-direction: column;
    align-items: flex-end;
    font-size: 14px;
    line-height: 20px;
    color: #d8d8d8;
  }

  .acrobat-badge {
    position: absolute;
    left: 1788px;
    top: 808px;
    width: 30px;
    height: 30px;
    background: #ce7f7b;
    border-radius: 4px;
    display: flex;
    align-items: center;
    justify-content: center;
  }

  .acrobat-badge .ic { stroke: #fff; }

  /* Taskbar */
  .taskbar {
    height: 60px;
    flex: none;
    box-sizing: border-box;
    border-top: 1px solid #c9c1bd;
    display: flex;
    align-items: center;
    position: relative;
    background: linear-gradient(90deg, #e8e8e2 0%, #e9e7e0 30%, #f0e2d8 48%, #f6e3e0 60%, #f0dde8 63%, #dee2f4 67%, #dfe4f5 74%, #f3e0ea 79%, #dfe3f4 83%, #dfe3f3 95%, #f6e5de 100%);
  }

  .widget {
    display: flex;
    align-items: center;
    gap: 13px;
    padding-left: 29px;
    width: 462px;
    box-sizing: border-box;
    flex: none;
  }

  .widget-text {
    display: flex;
    flex-direction: column;
    font-size: 14.500px;
    line-height: 20px;
  }

  .muted { color: #5f5f5f; }

  .task-center {
    display: flex;
    align-items: center;
  }

  .task-icon {
    width: 55px;
    height: 47px;
    position: relative;
    display: flex;
    align-items: center;
    justify-content: center;
    flex: none;
  }

  .task-icon.edge {
    background: rgba(255, 255, 255, 0.55);
    border-radius: 4px;
    width: 47px;
    margin: 0 4px;
  }

  .run-mark {
    position: absolute;
    bottom: 0;
    left: 50%;
    height: 3px;
    border-radius: 2px;
    transform: translateX(-50%);
  }

  .run-mark.teal { width: 20px; background: #2b8a9a; }
  .run-mark.grey { width: 8px; background: #808080; }

  .search {
    width: 274px;
    height: 38px;
    box-sizing: border-box;
    border-radius: 19px;
    background: #f7f5f2;
    border: 1px solid #e6e3df;
    border-bottom-color: #c4c1bd;
    display: flex;
    align-items: center;
    position: relative;
    font-size: 16px;
    color: #555;
    flex: none;
    margin-left: 5px;
    margin-right: 2px;
    padding-left: 14px;
    gap: 12px;
  }

  .search-glass { stroke: #1a1a1a; stroke-width: 1.800; }

  .dragon {
    position: absolute;
    right: 8px;
    top: 3px;
  }

  .app-letter {
    font: 700 11px "Liberation Sans", sans-serif;
    fill: #fff;
  }

  .chrome {
    width: 30px;
    height: 30px;
    border-radius: 50%;
    background: conic-gradient(from -75deg, #e0483a 0 165deg, #fbc116 165deg 275deg, #3aa655 275deg 360deg);
    display: flex;
    align-items: center;
    justify-content: center;
  }

  .chrome span {
    width: 15px;
    height: 15px;
    border-radius: 50%;
    background: #4285f4;
    border: 2px solid #fff;
    box-sizing: border-box;
  }

  .canva {
    font: italic 700 9.500px "Liberation Serif", serif;
    fill: #fff;
  }

  .netflix {
    font: 700 30px/30px "Liberation Sans", sans-serif;
    color: #cb151d;
    display: inline-block;
    transform: scaleX(0.55);
  }

  .tray {
    position: absolute;
    right: 0;
    top: 0;
    bottom: 0;
    display: flex;
    align-items: center;
    padding-right: 26.500px;
  }

  .tray-chev { margin-right: 24px; stroke-width: 1.800; }
  .tray-wifi { margin-left: 22px; margin-right: 8px; }
  .tray > svg + svg { margin-right: 8px; }

  .lang, .clock {
    display: flex;
    flex-direction: column;
    font-size: 14.500px;
    line-height: 20px;
    color: #111;
  }

  .lang { align-items: center; }
  .clock { align-items: flex-end; margin-left: 12px; }

  .bell {
    margin-left: 11px;
    margin-right: 18.500px;
    display: flex;
  }

  .bell-z {
    font: 700 8px "Liberation Sans", sans-serif;
    fill: #fff;
  }

  .bell-zz {
    font: 700 6px "Liberation Sans", sans-serif;
    fill: #111;
  }

  .copilot-pre {
    position: relative;
    width: 30px;
    height: 34px;
  }

  .pre-tag {
    position: absolute;
    right: -2px;
    bottom: 0;
    background: #f8c61c;
    color: #111;
    font: 700 8.500px/10px "Liberation Sans", sans-serif;
    padding: 0 2px;
    border-radius: 2px;
    letter-spacing: 0.500px;
  }

  /* Watermark sits above everything */
  .activate {
    position: absolute;
    left: 1554px;
    top: 913px;
    color: rgba(110, 110, 110, 0.42);
    pointer-events: none;
  }

  .activate-title {
    font-size: 24px;
    line-height: 36px;
  }

  .activate-sub {
    font-size: 17px;
    line-height: 24px;
    letter-spacing: 0.100px;
  }
</style>
